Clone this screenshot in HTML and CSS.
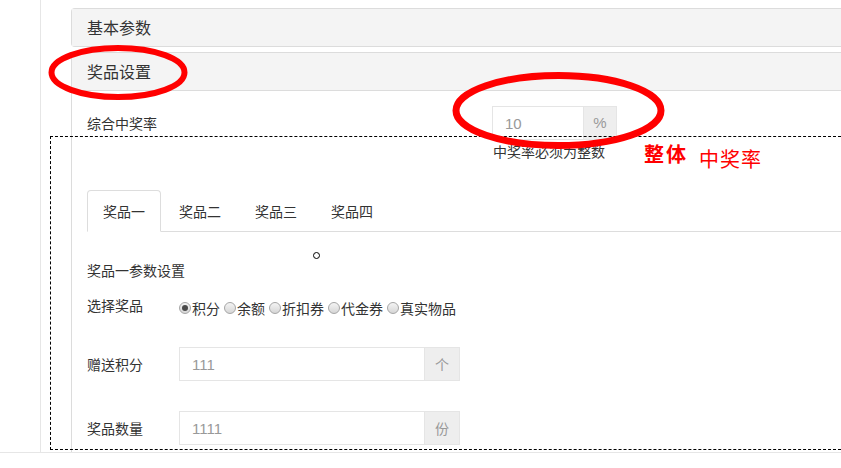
FILE: index.html
```html
<!DOCTYPE html>
<html>
<head>
	<meta charset="utf-8">
	<title>奖品设置</title>
	<link rel="stylesheet" href="styles.css">
</head>
<body>
	<div class="page">
		<div class="side"></div>
		<div class="main">
			<div class="panel">
				<div class="panel-heading">基本参数</div>
			</div>
			<div class="panel open">
				<div class="panel-heading">奖品设置</div>
				<div class="panel-body">
					<div class="row row-top">
						<label class="lbl lbl-wide">综合中奖率</label>
						<div class="group group-sm">
							<input class="ipt" type="text" value="10">
							<span class="addon">%</span>
						</div>
					</div>
					<p class="help">中奖率必须为整数</p>

					<ul class="tabs">
						<li class="active">奖品一</li>
						<li>奖品二</li>
						<li>奖品三</li>
						<li>奖品四</li>
					</ul>

					<div class="tab-pane">
						<p class="sub">奖品一参数设置</p>
						<div class="row row-radio">
							<label class="lbl">选择奖品</label>
							<div class="radios">
								<span class="radio checked"></span>积分
								<span class="radio"></span>余额
								<span class="radio"></span>折扣券
								<span class="radio"></span>代金券
								<span class="radio"></span>真实物品
							</div>
						</div>
						<div class="row row-field">
							<label class="lbl">赠送积分</label>
							<div class="group">
								<input class="ipt" type="text" value="111">
								<span class="addon">个</span>
							</div>
						</div>
						<div class="row row-field">
							<label class="lbl">奖品数量</label>
							<div class="group">
								<input class="ipt" type="text" value="1111">
								<span class="addon">份</span>
							</div>
						</div>
					</div>
				</div>
			</div>
		</div>
	</div>

	<!-- annotations drawn over the screenshot -->
	<div class="dash-box"></div>
	<span class="cursor"></span>
	<span class="note note-a">整体</span>
	<span class="note note-b">中奖率</span>
	<svg class="marks" width="841" height="468" viewBox="0 0 841 468">
		<ellipse cx="118" cy="72.5" rx="66.5" ry="24.5" fill="none" stroke="#f00" stroke-width="6"/>
		<ellipse cx="558.5" cy="110.5" rx="102.5" ry="35" fill="none" stroke="#f00" stroke-width="7"/>
	</svg>
</body>
</html>
```

FILE: styles.css
```css
* {
	box-sizing: border-box;
}
html, body {
	margin: 0;
	height: 100%;
	overflow: hidden;
}
body {
	position: relative;
	font-family: "Noto Sans CJK SC", "Liberation Sans", sans-serif;
	font-size: 14px;
	color: #333;
	background: #fff;
}
p {
	margin: 0;
}
.page {
	display: flex;
	height: 453px;
	border-bottom: 1px solid #e6e6e6;
	overflow: hidden;
}
.side {
	width: 41px;
	flex: none;
	border-right: 1px solid #e6e6e6;
}
.main {
	flex: 1;
	min-width: 0;
	padding: 8px 0 0 30px;
}
.panel {
	border: 1px solid #dcdcdc;
	border-right: none;
	border-radius: 4px 0 0 4px;
}
.panel + .panel {
	margin-top: 5px;
}
.panel.open {
	border-bottom: none;
	border-bottom-left-radius: 0;
	height: 420px;
}
.panel-heading {
	height: 37px;
	line-height: 37px;
	padding-left: 15px;
	font-size: 16px;
	background: #f4f4f4;
}
.panel.open .panel-heading {
	height: 38px;
	border-bottom: 1px solid #dcdcdc;
}
.panel-body {
	padding: 15px 0 0 15px;
}
.row {
	display: flex;
	align-items: center;
}
.lbl {
	width: 92px;
	flex: none;
	line-height: 20px;
}
.lbl-wide {
	width: 405px;
}
.group {
	display: flex;
	height: 34px;
}
.ipt {
	width: 245px;
	height: 34px;
	margin: 0;
	padding: 0 12px;
	border: 1px solid #e5e5e5;
	border-right: none;
	font-family: "Liberation Sans", sans-serif;
	font-size: 15px;
	color: #999;
	outline: none;
}
.addon {
	width: 36px;
	height: 34px;
	line-height: 32px;
	text-align: center;
	background: #eee;
	border: 1px solid #e5e5e5;
	color: #999;
}
.group-sm .ipt {
	width: 91px;
}
.group-sm .addon {
	width: 34px;
	font-family: "Liberation Sans", sans-serif;
	font-size: 15px;
}
.help {
	margin: 3px 0 0 406px;
	line-height: 16px;
	color: #333;
}
.tabs {
	list-style: none;
	margin: 31px 0 0;
	padding: 0;
	display: flex;
	border-bottom: 1px solid #ddd;
}
.tabs li {
	margin: 0 2px -1px 0;
	padding: 10px 15px;
	line-height: 20px;
	border: 1px solid transparent;
	border-radius: 4px 4px 0 0;
}
.tabs li.active {
	border-color: #ddd #ddd transparent;
	background: #fff;
}
.tab-pane {
	padding-top: 28px;
}
.sub {
	line-height: 20px;
}
.row-radio {
	margin-top: 15px;
	align-items: flex-start;
}
.radios {
	display: flex;
	align-items: center;
	line-height: 20px;
	padding-top: 3px;
}
.radio {
	position: relative;
	width: 12px;
	height: 12px;
	margin: 0 1px 0 4px;
	border: 1px solid #a6a6a6;
	border-radius: 50%;
	background: linear-gradient(to bottom, #f4f4f4 0%, #d6d6d6 100%);
}
.radio:first-child {
	margin-left: 0;
}
.radio.checked::after {
	content: "";
	position: absolute;
	left: 2px;
	top: 2px;
	width: 6px;
	height: 6px;
	border-radius: 50%;
	background: #4a4a4a;
}
.row-radio + .row-field {
	margin-top: 29px;
}
.row-field + .row-field {
	margin-top: 30px;
}

/* annotations */
.dash-box {
	position: absolute;
	left: 50px;
	right: 0;
	top: 136px;
	height: 314px;
	border: 1px dashed #000;
	border-right: none;
}
.cursor {
	position: absolute;
	left: 313px;
	top: 252px;
	width: 7px;
	height: 7px;
	border: 1px solid #000;
	border-radius: 50%;
	background: #fff;
}
.note {
	position: absolute;
	color: #f00;
	font-size: 20px;
	line-height: 24px;
}
.note-a {
	left: 644px;
	top: 142px;
	font-weight: 700;
	letter-spacing: 2px;
}
.note-b {
	left: 699px;
	top: 147px;
	letter-spacing: 1px;
}
.marks {
	position: absolute;
	left: 0;
	top: 0;
	pointer-events: none;
}
```
